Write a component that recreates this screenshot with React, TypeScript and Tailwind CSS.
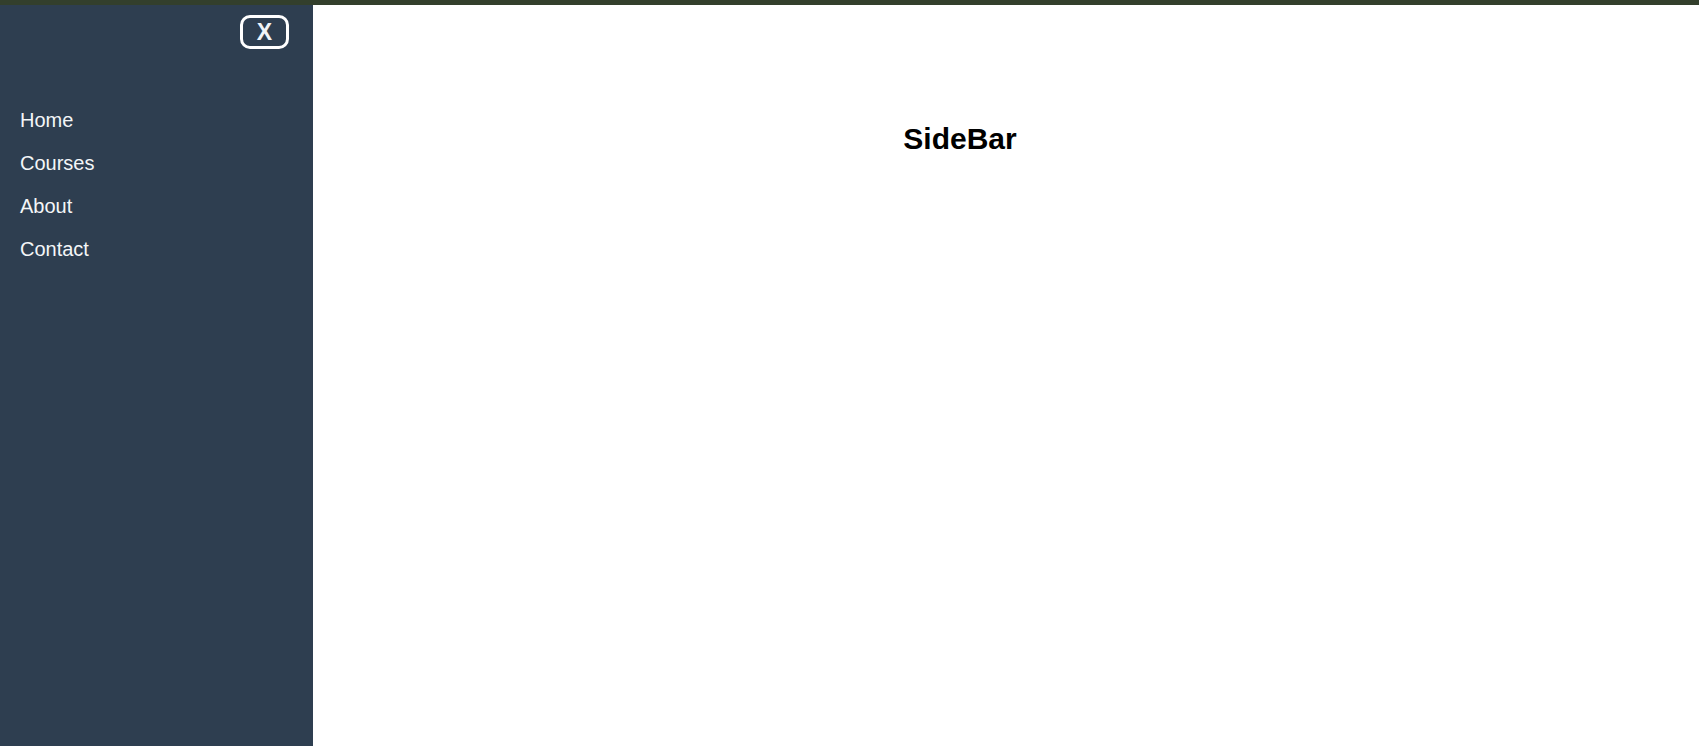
const LINKS = ["Home", "Courses", "About", "Contact"];

export default function App() {
  return (
    <div className="flex h-[746px] flex-col bg-white font-['Liberation_Sans',Arial,sans-serif]">
      <div className="h-[5px] w-full bg-[#333f2c]" />
      <div className="flex flex-1">
        <aside className="w-[313px] flex-shrink-0 bg-[#2e3e50]">
          <div className="flex justify-end pr-[24px] pt-[10px]">
            <button className="flex h-[34px] w-[49px] items-center justify-center rounded-[10px] border-[3px] border-white text-[23px] font-bold leading-none text-[#f0f4f8]">
              X
            </button>
          </div>
          <ul className="mt-[50px]">
            {LINKS.map((link) => (
              <li
                key={link}
                className="py-[10px] pl-[20px] text-[20px] leading-[23px] text-[#f4f6f8]"
              >
                {link}
              </li>
            ))}
          </ul>
        </aside>
        <main className="flex-1 pr-[92px] pt-[119px]">
          <h1 className="text-center text-[30px] font-bold leading-none text-black">
            SideBar
          </h1>
        </main>
      </div>
    </div>
  );
}
